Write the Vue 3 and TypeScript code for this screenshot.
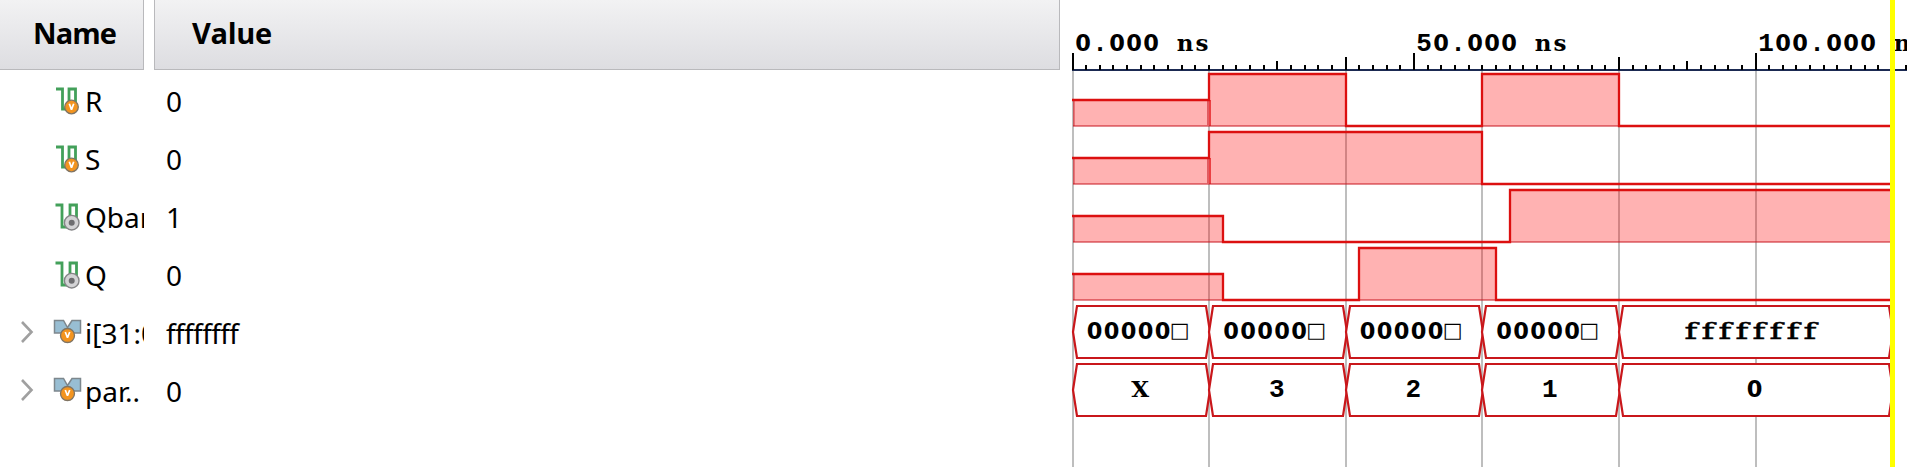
<script setup lang="ts">
type Level = 0 | 1 | 'x'
interface Segment { from: number; to: number; level: Level }
interface Signal { name: string; value: string; kind: 'variable' | 'net' | 'bus' }
interface Cell { from: number; to: number; text: string }
interface Glyph { ch: string; x: number; rise: number; cls: string }

const signals: Signal[] = [
  { name: 'R', value: '0', kind: 'variable' },
  { name: 'S', value: '0', kind: 'variable' },
  { name: 'Qbar', value: '1', kind: 'net' },
  { name: 'Q', value: '0', kind: 'net' },
  { name: 'i[31:0]', value: 'ffffffff', kind: 'bus' },
  { name: 'par..', value: '0', kind: 'bus' },
]

const ORIGIN = 13
const PITCH = 58
const CHAR = 17
const WIDE = 1.5
const xAt = (ns: number): number => Math.floor(ORIGIN + ns * 6.83)

const waves: Segment[][] = [
  [
    { from: 0, to: 20, level: 'x' }, { from: 20, to: 40, level: 1 }, { from: 40, to: 60, level: 0 },
    { from: 60, to: 80, level: 1 }, { from: 80, to: 120, level: 0 },
  ],
  [{ from: 0, to: 20, level: 'x' }, { from: 20, to: 60, level: 1 }, { from: 60, to: 120, level: 0 }],
  [{ from: 0, to: 22, level: 'x' }, { from: 22, to: 64, level: 0 }, { from: 64, to: 120, level: 1 }],
  [
    { from: 0, to: 22, level: 'x' }, { from: 22, to: 42, level: 0 },
    { from: 42, to: 62, level: 1 }, { from: 62, to: 120, level: 0 },
  ],
]

const bounds = [0, 20, 40, 60, 80, 120]
const toCells = (texts: string[]): Cell[] =>
  texts.map((text, i) => ({ from: bounds[i], to: bounds[i + 1], text }))
const buses: Cell[][] = [
  toCells(['00000□', '00000□', '00000□', '00000□', 'ffffffff']),
  toCells(['X', '3', '2', '1', '0']),
]

const base = (row: number): number => 126 + row * PITCH
const levelY = (row: number, level: Level): number =>
  level === 0 ? base(row) : level === 1 ? base(row) - 52 : base(row) - 26

const trace = (row: number): string =>
  waves[row]
    .map((s, i) => {
      const y = levelY(row, s.level)
      return `${i ? 'L' : 'M'}${i ? xAt(s.from) : xAt(s.from) - 1} ${y}L${xAt(s.to)} ${y}`
    })
    .join('')

const cellPath = (c: Cell, row: number): string => {
  const l = xAt(c.from)
  const r = xAt(c.to)
  const t = 306 + row * PITCH
  return `M${l} ${t + 26}L${l + 4} ${t}H${r - 3}L${r + 1} ${t + 26}L${r - 3} ${t + 52}H${l + 4}Z`
}

const isWide = (text: string): boolean => text[0] === 'f'
const glyphClass = (ch: string): string =>
  ch === '0' ? 'zero' : ch === '□' ? 'box' : ch === 'f' ? 'eff' : /[nsX]/.test(ch) ? 'slab' : 'mono'
const glyphs = (text: string, first: number): Glyph[] =>
  [...text].map((ch, i) => ({
    ch,
    x: (first + i * CHAR) / (isWide(text) ? WIDE : 1),
    rise: ch === '□' ? 2.3 : 0,
    cls: glyphClass(ch),
  }))
const cellGlyphs = (c: Cell): Glyph[] => {
  const gaps = c.text.length - 1
  return glyphs(c.text, (xAt(c.from) + xAt(c.to)) / 2 - gaps * (CHAR / 2 + 0.6) - 0.8)
}

const labels = [
  { at: 0, text: '0.000 ns' },
  { at: 50, text: '50.000 ns' },
  { at: 100, text: '100.000 ns' },
]
const ticks = Array.from({ length: 62 }, (_, i) => i * 2).map((t) => ({
  x: xAt(t),
  y: t % 50 === 0 ? 53 : t % 40 === 0 && t < 120 ? 57 : t === 30 || t === 90 ? 61 : 65,
}))
const grid = [0, 20, 40, 60, 80, 100]
</script>

<template>
  <main class="viewer">
    <section class="column names">
      <header class="head">Name</header>
      <div v-for="s in signals" :key="s.name" class="row">
        <svg class="chevron" width="16" height="26" viewBox="0 0 16 26">
          <path v-if="s.kind === 'bus'" d="M3 2 12.500 12 3 22" />
        </svg>
        <svg class="icon" width="30" height="30" viewBox="0 0 30 30">
          <template v-if="s.kind === 'bus'">
            <path class="bus" d="M2.500 2.500H11.500L15.500 9.500 20 2.500H28.500V15H2.500Z" />
            <circle class="orange" cx="15.500" cy="17.500" r="7" />
            <path class="vee" d="M13.300 14 15.500 19.800 17.700 14" />
          </template>
          <template v-else-if="s.kind === 'variable'">
            <path class="pulse" d="M4 3H10.500V23H17V3H23.500V20" />
            <circle class="orange" cx="19.500" cy="21" r="6.800" />
            <path class="vee" d="M17.300 17.800 19.500 23.600 21.700 17.800" />
          </template>
          <template v-else>
            <path class="pulse" d="M3.500 3H10V25H18V3H24.500V20" />
            <circle class="silver" cx="19.700" cy="20.700" r="7.300" />
            <circle class="dot" cx="19.700" cy="20.700" r="3" />
          </template>
        </svg>
        <span class="label">{{ s.name }}</span>
      </div>
    </section>

    <section class="column values">
      <header class="head">Value</header>
      <div v-for="s in signals" :key="s.name" class="row">
        <span :class="{ hex: s.value.length > 1 }">{{ s.value }}</span>
      </div>
    </section>

    <svg class="wave" width="847" height="467" viewBox="0 0 847 467">
      <path v-for="g in grid" :key="g" class="grid" :d="`M${xAt(g)} 71V467`" />
      <path class="axis" d="M12 70H847" />
      <path v-for="t in ticks" :key="t.x" class="tick" :d="`M${t.x} ${t.y}V70`" />
      <text v-for="l in labels" :key="l.at" y="51" class="mono-text">
        <tspan v-for="(g, i) in glyphs(l.text, xAt(l.at) + 10)" :key="i" :x="g.x" :class="g.cls">{{ g.ch }}</tspan>
      </text>

      <g v-for="(segs, row) in waves" :key="row">
        <template v-for="s in segs" :key="s.from">
          <rect
            v-if="s.level !== 0"
            class="fill"
            :x="xAt(s.from)"
            :y="levelY(row, s.level)"
            :width="xAt(s.to) - xAt(s.from)"
            :height="base(row) - levelY(row, s.level)"
          />
          <path v-if="s.level !== 0" class="floor" :d="`M${xAt(s.from)} ${base(row)}H${xAt(s.to)}`" />
          <path v-if="s.level === 'x'" class="side" :d="`M${xAt(s.from) + 1} ${levelY(row, s.level)}V${base(row)}`" />
          <path
            v-if="s.level === 'x' && s.to === 20"
            class="seam"
            :d="`M${xAt(s.to)} ${levelY(row, s.level)}V${base(row)}`"
          />
        </template>
        <path class="trace" :d="trace(row)" />
      </g>

      <g v-for="(cells, row) in buses" :key="row">
        <path v-for="c in cells" :key="c.from" class="cell" :d="cellPath(c, row)" />
        <text
          v-for="c in cells"
          :key="c.from"
          :y="339 + row * PITCH"
          class="mono-text"
          :transform="isWide(c.text) ? `scale(${WIDE} 1)` : undefined"
        >
          <tspan
            v-for="(g, i) in cellGlyphs(c)"
            :key="i"
            :x="g.x"
            :y="339 + row * PITCH - g.rise"
            :class="g.cls"
          >{{ g.ch }}</tspan>
        </text>
      </g>
      <rect class="cursor" x="830" y="0" width="5" height="467" />
    </svg>
  </main>
</template>

<style>
body {
  margin: 0;
  background: #fff;
}
</style>

<style scoped>
.viewer {
  display: grid;
  grid-template-columns: 144px 906px 847px;
  column-gap: 10px;
  width: 1907px;
  height: 467px;
  overflow: hidden;
  color: #000;
  font-family: "Noto Sans", "Open Sans", sans-serif;
}
.wave {
  display: block;
  margin-left: -10px;
}
.column {
  overflow: hidden;
}
.head {
  box-sizing: border-box;
  height: 70px;
  padding-left: 33px;
  border-right: 1px solid #b9b9bc;
  border-bottom: 1px solid #b9b9bc;
  background: linear-gradient(#f2f2f3, #dddde1);
  font: 700 29px/66px "Open Sans", sans-serif;
  letter-spacing: -0.900px;
}
.values .head {
  border-left: 1px solid #b9b9bc;
  padding-left: 37px;
  letter-spacing: -0.300px;
}
.row {
  display: flex;
  height: 58px;
  align-items: center;
  white-space: nowrap;
  font-size: 28px;
  line-height: 58px;
}
.head + .row {
  margin-top: 2px;
}
.values .row {
  padding-left: 12px;
}
.hex {
  letter-spacing: -0.600px;
}
.chevron {
  flex: none;
  margin: 0 17px 0 19px;
}
.chevron path {
  fill: none;
  stroke: #a0a0a0;
  stroke-width: 2.600;
}
.icon {
  flex: none;
  margin-right: 3px;
}
.label {
  flex: none;
}
.pulse {
  fill: none;
  stroke: #43a05a;
  stroke-width: 2.800;
}
.bus {
  fill: #98bed3;
  stroke: #7d878d;
  stroke-width: 1.500;
}
.orange {
  fill: #f3941f;
  stroke: #807463;
  stroke-width: 1.300;
}
.vee {
  fill: none;
  stroke: #fff;
  stroke-width: 1.700;
  stroke-linejoin: bevel;
}
.silver {
  fill: #d3d3d5;
  stroke: #858587;
  stroke-width: 1.400;
}
.dot {
  fill: #6d6d70;
}
.grid {
  stroke: #bebebe;
  stroke-width: 2;
}
.axis {
  stroke: #1b2a52;
  stroke-width: 2;
}
.tick {
  stroke: #000;
  stroke-width: 2;
}
.fill {
  fill: rgba(255, 0, 0, 0.3);
}
.floor {
  stroke: rgba(200, 20, 30, 0.5);
  stroke-width: 2;
}
.side {
  stroke: rgba(200, 20, 30, 0.4);
  stroke-width: 2;
}
.seam {
  stroke: #e15c61;
  stroke-width: 4;
}
.trace {
  fill: none;
  stroke: #dc1010;
  stroke-width: 2.300;
}
.cell {
  fill: #fff;
  stroke: #c9171b;
  stroke-width: 2.200;
}
.cursor {
  fill: #ff0;
}
.mono-text {
  font-family: "Liberation Mono", monospace;
  font-weight: 700;
  font-size: 26px;
  text-anchor: middle;
}
.zero {
  font-family: "DejaVu Sans", sans-serif;
  font-size: 22.500px;
}
.slab {
  font-family: "DejaVu Serif", serif;
  font-size: 23px;
}
.eff {
  font-family: "DejaVu Serif", serif;
  font-weight: 400;
  font-size: 23px;
  stroke: #000;
  stroke-width: 0.500;
}
.box {
  font-family: "DejaVu Sans", sans-serif;
  font-weight: 400;
  font-size: 21px;
}
</style>
